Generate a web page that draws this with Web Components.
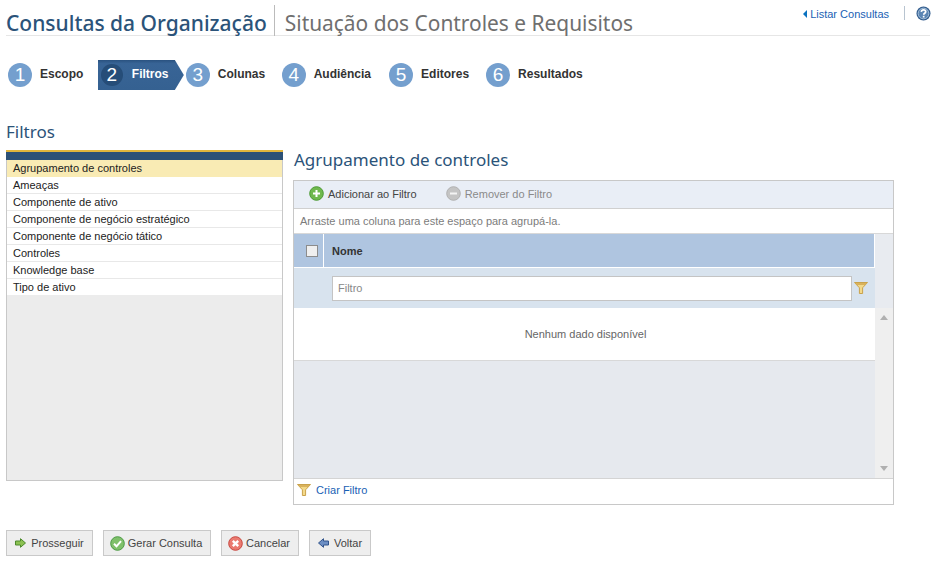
<!DOCTYPE html>
<html lang="pt">
<head>
<meta charset="utf-8">
<title>Consultas da Organização</title>
<style>
  html, body { margin: 0; padding: 0; background: #fff; }
  body { font-family: "Liberation Sans", Arial, sans-serif; font-size: 12px; color: #333; }
</style>
</head>
<body>
<query-page></query-page>

<script>
const TITLE_FONT = '"Noto Sans", "DejaVu Sans", sans-serif';

class PageHeader extends HTMLElement {
    constructor() {
        super();
        this.attachShadow({ mode: 'open' });
        this.shadowRoot.innerHTML = `
            <style>
                :host { display: flex; height: 35px; margin: 0 6px 0 6px; width: 924px; border-bottom: 1px solid #e6e6e6; }
                .title { font: 500 21px/20px ${TITLE_FONT}; color: #2b5379; padding-top: 8px; padding-right: 7px; border-right: 1px solid #bbb; height: 23px; margin-top: 5px; white-space: nowrap; }
                .sub { font: 400 20.9px/20px ${TITLE_FONT}; color: #6f6f6f; padding: 13px 0 0 10px; white-space: nowrap; flex: 1; }
                .links { display: flex; align-items: flex-start; padding-top: 6px; }
                .back { font-size: 11px; color: #1a5fb4; display: flex; align-items: center; gap: 3px; height: 14px; margin-top: 1px; }
                .back i { border: 4px solid transparent; border-right: 4px solid #0a72c0; border-left: 0; height: 0; width: 0; }
                .sep { width: 1px; height: 14px; background: #b8c4d0; margin: 0 11px 0 15px; }
                svg { display: block; margin-right: -1px; }
            </style>
            <div class="title"><slot name="title"></slot></div>
            <div class="sub"><slot name="sub"></slot></div>
            <div class="links">
                <span class="back"><i></i>Listar Consultas</span>
                <span class="sep"></span>
                <svg width="15" height="15" viewBox="0 0 15 15"><circle cx="7.5" cy="7.5" r="7" fill="#2f5a8c"/><circle cx="7.5" cy="7.5" r="5.4" fill="#5c86b4" stroke="#a9c3dc"/><path d="M5.3 5.8c.2-1.3 1.1-1.9 2.2-1.9 1.3 0 2.2.8 2.2 1.9 0 1.5-2 1.5-2 3" fill="none" stroke="#fff" stroke-width="1.7"/><rect x="6.8" y="9.8" width="1.7" height="1.7" fill="#fff"/></svg>
            </div>
        `;
    }
}
customElements.define('page-header', PageHeader);

class WizardStep extends HTMLElement {
    constructor() {
        super();
        this.attachShadow({ mode: 'open' });
        this.shadowRoot.innerHTML = `
            <style>
                :host { display: flex; align-items: center; height: 30px; font: bold 12px "Liberation Sans", Arial, sans-serif; color: #333; }
                .num { width: 24px; height: 24px; border-radius: 50%; background: #749fce; color: #fff; font: 19px/24px "Liberation Sans", Arial, sans-serif; text-align: center; margin-right: 8px; }
                .label { padding-bottom: 2px; }
                :host([active]) { width: 86px; height: 30px; color: #fff;
                    background: linear-gradient(#2a5280, #386496 12%, #356191);
                    clip-path: polygon(0 0, 77px 0, 86px 15px, 77px 30px, 0 30px); }
                :host([active]) .num { background: #264d78; width: 22px; height: 22px; line-height: 22px; margin: 0 8px 0 3px; }
                :host([active]) .label { margin-left: 1px; }
            </style>
            <span class="num"></span><span class="label"><slot></slot></span>
        `;
    }
    connectedCallback() {
        this.shadowRoot.querySelector('.num').textContent = this.getAttribute('n');
    }
}
customElements.define('wizard-step', WizardStep);

class WizardSteps extends HTMLElement {
    constructor() {
        super();
        this.attachShadow({ mode: 'open' });
        this.shadowRoot.innerHTML = `
            <style>
                :host { display: flex; align-items: center; padding: 24px 0 0 8px; height: 30px; }
                ::slotted(:nth-child(1)) { margin-right: 14.5px; }
                ::slotted(:nth-child(2)) { margin-right: 2px; }
                ::slotted(:nth-child(3)) { margin-right: 16.5px; }
                ::slotted(:nth-child(4)) { margin-right: 18px; }
                ::slotted(:nth-child(5)) { margin-right: 17px; }
            </style>
            <slot></slot>
        `;
    }
}
customElements.define('wizard-steps', WizardSteps);

class FilterList extends HTMLElement {
    constructor() {
        super();
        this.attachShadow({ mode: 'open' });
        this.shadowRoot.innerHTML = `
            <style>
                :host { display: block; width: 277px; height: 331px; box-sizing: border-box; border: 1px solid #c8c8c8; border-top: 0; background: #ececec; }
                .bar { height: 10px; margin: 0 -1px; box-sizing: border-box; border-top: 2px solid #e0b43c; background: #2c5076; }
                ul { list-style: none; margin: 0; padding: 0; font: 11px/16px "Liberation Sans", Arial, sans-serif; color: #222; }
                li { height: 16px; padding-left: 6px; background: #fff; border-bottom: 1px solid #e8e8e8; white-space: nowrap; }
                li:last-child { border-bottom: 0; }
                li.sel { background: #f9ebb4; border-bottom-color: #f9ebb4; }
            </style>
            <div class="bar"></div>
            <ul></ul>
        `;
    }
    connectedCallback() {
        const ul = this.shadowRoot.querySelector('ul');
        (this.getAttribute('items') || '').split('|').forEach((text, i) => {
            const li = document.createElement('li');
            li.textContent = text;
            if (i === 0) li.className = 'sel';
            ul.appendChild(li);
        });
    }
}
customElements.define('filter-list', FilterList);

const ICONS = {
    add: '<svg width="15" height="15" viewBox="0 0 15 15"><circle cx="7.5" cy="7.5" r="6.8" fill="#6fb84e" stroke="#4c9a34"/><path d="M7.5 4v7M4 7.5h7" stroke="#fff" stroke-width="2"/></svg>',
    remove: '<svg width="15" height="15" viewBox="0 0 15 15"><circle cx="7.5" cy="7.5" r="6.8" fill="#c4c4c4" stroke="#b0b0b0"/><path d="M4 7.5h7" stroke="#f4f4f4" stroke-width="2"/></svg>',
    funnel: '<svg width="14" height="12" viewBox="0 0 14 12"><path d="M.5 .5h13L8.6 5.8V11.5H5.4V5.8z" fill="#f3d98a" stroke="#c9a24c"/><path d="M1 1h12L11 3H3z" fill="#d9b25c"/></svg>',
    next: '<svg width="11" height="10" viewBox="0 0 11 10"><path d="M.5 3h5V.7L10.5 5l-5 4.3V7h-5z" fill="#8cc152" stroke="#4c8a2c"/></svg>',
    ok: '<svg width="15" height="15" viewBox="0 0 15 15"><circle cx="7.5" cy="7.5" r="6.8" fill="#7fc06a" stroke="#4c9a44"/><path d="M4 7.8l2.5 2.5L11 5.2" fill="none" stroke="#fff" stroke-width="2"/></svg>',
    cancel: '<svg width="15" height="15" viewBox="0 0 15 15"><circle cx="7.5" cy="7.5" r="6.8" fill="#ea7a70" stroke="#c8473f"/><path d="M4.8 4.8l5.4 5.4M10.2 4.8l-5.4 5.4" stroke="#fff" stroke-width="2.4"/></svg>',
    back: '<svg width="11" height="10" viewBox="0 0 11 10"><path d="M10.5 3h-5V.7L.5 5l5 4.3V7h5z" fill="#6d8fc4" stroke="#33548c"/></svg>'
};

class IconButton extends HTMLElement {
    constructor() {
        super();
        this.attachShadow({ mode: 'open' });
        this.shadowRoot.innerHTML = `
            <style>
                :host { display: flex; align-items: center; justify-content: center; gap: 3px; box-sizing: border-box; height: 26px; padding-right: 2px; border: 1px solid #c9c9c9; background: #eeeeee; font: 11px "Liberation Sans", Arial, sans-serif; color: #444; white-space: nowrap; }
                span { display: flex; width: 15px; justify-content: center; }
            </style>
            <span class="ic"></span><slot></slot>
        `;
    }
    connectedCallback() {
        this.shadowRoot.querySelector('.ic').innerHTML = ICONS[this.getAttribute('icon')];
        this.style.width = this.getAttribute('w') + 'px';
    }
}
customElements.define('icon-button', IconButton);

class DataGrid extends HTMLElement {
    constructor() {
        super();
        this.attachShadow({ mode: 'open' });
        this.shadowRoot.innerHTML = `
            <style>
                :host { display: flex; flex-direction: column; width: 601px; height: 325px; box-sizing: border-box; border: 1px solid #c8c8c8; font: 11px "Liberation Sans", Arial, sans-serif; color: #444; }
                .toolbar { display: flex; align-items: center; flex: none; background: #e9eef6; border-bottom: 1px solid #d0d0d0; padding: 0 0 2px 15px; box-sizing: border-box; height: 28px; }
                .tool { display: flex; align-items: center; gap: 4px; margin-right: 29px; }
                .tool.off { color: #8a8a8a; }
                .tool svg, .foot svg { display: block; }
                .group { height: 25px; flex: none; line-height: 24px; padding-left: 6px; color: #7c7c7c; border-bottom: 1px solid #d8d8d8; box-sizing: border-box; }
                .body { flex: 1; display: grid; grid-template-columns: 1fr 18px; grid-template-rows: 34px 40px 1fr; background: #e6e9ee; min-height: 0; }
                .head { display: flex; background: #afc5e0; border-right: 1px solid #fff; border-bottom: 1px solid #fff; box-sizing: border-box; font-weight: bold; color: #333; }
                .chk { width: 30px; flex: none; border-right: 1px solid #fff; display: flex; align-items: center; justify-content: flex-end; padding-right: 5px; box-sizing: border-box; }
                .chk i { display: block; width: 10px; height: 10px; border: 1px solid #8c8c8c; background: #efefef; }
                .name { padding-left: 8px; line-height: 35px; }
                .side { background: #e8ebf0; grid-row: 1 / 3; grid-column: 2; }
                .filter { display: flex; align-items: center; background: #d8e3ee; padding: 0 7px 0 38px; gap: 2px; grid-column: 1; grid-row: 2; }
                .input { flex: 1; height: 25px; box-sizing: border-box; border: 1px solid #c4c4c4; background: #fff; color: #888; line-height: 23px; padding-left: 5px; }
                .filter svg { flex: none; }
                .content { min-height: 0; }
                .empty { height: 53px; box-sizing: border-box; background: #fff; border-bottom: 1px solid #d8d8d8; text-align: center; line-height: 52px; color: #666; padding-left: 2px; }
                .scroll { background: #efefef; display: flex; flex-direction: column; justify-content: space-between; align-items: center; padding: 7px 0; box-sizing: border-box; }
                .up, .down { width: 0; height: 0; border: 4px solid transparent; }
                .up { border-bottom: 5px solid #b0b0b0; border-top: 0; }
                .down { border-top: 5px solid #b0b0b0; border-bottom: 0; }
                .foot { height: 26px; flex: none; display: flex; align-items: center; gap: 5px; padding: 0 0 3px 3px; border-top: 1px solid #d4d4d4; color: #1a5fb4; box-sizing: border-box; background: #fff; }
            </style>
            <div class="toolbar">
                <span class="tool">${ICONS.add}Adicionar ao Filtro</span>
                <span class="tool off">${ICONS.remove}Remover do Filtro</span>
            </div>
            <div class="group">Arraste uma coluna para este espaço para agrupá-la.</div>
            <div class="body">
                <div class="head"><div class="chk"><i></i></div><div class="name">Nome</div></div>
                <div class="side"></div>
                <div class="filter"><div class="input">Filtro</div>${ICONS.funnel}</div>
                <div class="content"><div class="empty">Nenhum dado disponível</div></div>
                <div class="scroll"><i class="up"></i><i class="down"></i></div>
            </div>
            <div class="foot">${ICONS.funnel}Criar Filtro</div>
        `;
    }
}
customElements.define('data-grid', DataGrid);

class QueryPage extends HTMLElement {
    constructor() {
        super();
        this.attachShadow({ mode: 'open' });
        this.shadowRoot.innerHTML = `
            <style>
                :host { display: block; width: 935px; height: 563px; overflow: hidden; }
                h2 { margin: 0; font: 400 17px/20px ${TITLE_FONT}; color: #2b5379; white-space: nowrap; }
                .section { padding: 32px 0 0 6px; height: 20px; }
                .cols { display: flex; gap: 10px; padding: 8px 0 0 6px; }
                .right h2 { margin: 0 0 10px 1px; }
                .right { display: flex; flex-direction: column; }
                .actions { display: flex; gap: 10px; padding: 25px 0 0 6px; }
            </style>
            <page-header>
                <span slot="title">Consultas da Organização</span>
                <span slot="sub">Situação dos Controles e Requisitos</span>
            </page-header>
            <wizard-steps>
                <wizard-step n="1">Escopo</wizard-step>
                <wizard-step n="2" active>Filtros</wizard-step>
                <wizard-step n="3">Colunas</wizard-step>
                <wizard-step n="4">Audiência</wizard-step>
                <wizard-step n="5">Editores</wizard-step>
                <wizard-step n="6">Resultados</wizard-step>
            </wizard-steps>
            <div class="section"><h2>Filtros</h2></div>
            <div class="cols">
                <filter-list items="Agrupamento de controles|Ameaças|Componente de ativo|Componente de negócio estratégico|Componente de negócio tático|Controles|Knowledge base|Tipo de ativo"></filter-list>
                <div class="right">
                    <h2>Agrupamento de controles</h2>
                    <data-grid></data-grid>
                </div>
            </div>
            <div class="actions">
                <icon-button icon="next" w="87">Prosseguir</icon-button>
                <icon-button icon="ok" w="108">Gerar Consulta</icon-button>
                <icon-button icon="cancel" w="78">Cancelar</icon-button>
                <icon-button icon="back" w="62">Voltar</icon-button>
            </div>
        `;
    }
}
customElements.define('query-page', QueryPage);
</script>
</body>
</html>
